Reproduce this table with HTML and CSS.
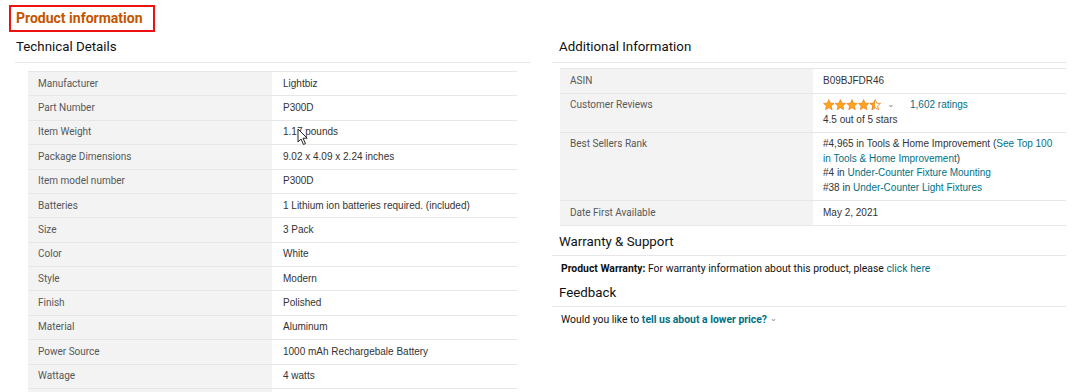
FILE: index.html
```html
<!DOCTYPE html>
<html lang="en">
<head>
  <meta charset="UTF-8" />
  <title>Product information</title>
  <link rel="stylesheet" href="styles.css">
</head>
<body>
  <div class="title-box"><h2>Product information</h2></div>

  <div class="columns">
    <!-- left: technical details -->
    <section class="col">
      <h3 class="section-head">Technical Details</h3>
      <table class="specs specs-tech">
        <tr><th>Manufacturer</th><td>Lightbiz</td></tr>
        <tr><th>Part Number</th><td>P300D</td></tr>
        <tr><th>Item Weight</th><td class="has-cursor">1.17 pounds
          <svg class="cursor" width="12" height="18" viewBox="0 0 12 18"><path d="M1 1 L1 14 L4 11 L6.5 16.5 L8.5 15.6 L6 10.2 L10.2 10.2 Z" fill="#fff" stroke="#222" stroke-width="1" stroke-linejoin="round"/></svg>
        </td></tr>
        <tr><th>Package Dimensions</th><td>9.02 x 4.09 x 2.24 inches</td></tr>
        <tr><th>Item model number</th><td>P300D</td></tr>
        <tr><th>Batteries</th><td>1 Lithium ion batteries required. (included)</td></tr>
        <tr><th>Size</th><td>3 Pack</td></tr>
        <tr><th>Color</th><td>White</td></tr>
        <tr><th>Style</th><td>Modern</td></tr>
        <tr><th>Finish</th><td>Polished</td></tr>
        <tr><th>Material</th><td>Aluminum</td></tr>
        <tr><th>Power Source</th><td>1000 mAh Rechargebale Battery</td></tr>
        <tr><th>Wattage</th><td>4 watts</td></tr>
        <tr class="spacer"><th></th><td></td></tr>
      </table>
    </section>

    <!-- right: additional info, warranty, feedback -->
    <section class="col col-right">
      <h3 class="section-head">Additional Information</h3>
      <table class="specs specs-extra">
        <tr><th>ASIN</th><td>B09BJFDR46</td></tr>
        <tr><th>Customer Reviews</th><td>
          <div class="rating-line">
            <svg class="stars" width="58" height="12" viewBox="0 0 58 12">
              <defs>
                <linearGradient id="half"><stop offset="50%" stop-color="#ffa41c"/><stop offset="50%" stop-color="#fff"/></linearGradient>
                <path id="st" d="M5.8 0.6 L7.3 4.1 L11.1 4.4 L8.2 6.9 L9.1 10.7 L5.8 8.7 L2.5 10.7 L3.4 6.9 L0.5 4.4 L4.3 4.1 Z"/>
              </defs>
              <use href="#st" x="0" fill="#ffa41c" stroke="#e47911" stroke-width="0.6"/>
              <use href="#st" x="11.6" fill="#ffa41c" stroke="#e47911" stroke-width="0.6"/>
              <use href="#st" x="23.2" fill="#ffa41c" stroke="#e47911" stroke-width="0.6"/>
              <use href="#st" x="34.8" fill="#ffa41c" stroke="#e47911" stroke-width="0.6"/>
              <use href="#st" x="46.4" fill="url(#half)" stroke="#e47911" stroke-width="0.8"/>
            </svg>
            <span class="chev">&#8964;</span>
            <a href="#">1,602 ratings</a>
          </div>
          <div>4.5 out of 5 stars</div>
        </td></tr>
        <tr><th>Best Sellers Rank</th><td>
          #4,965 in Tools &amp; Home Improvement (<a href="#">See Top 100 in Tools &amp; Home Improvement</a>)<br>
          #4 in <a href="#">Under-Counter Fixture Mounting</a><br>
          #38 in <a href="#">Under-Counter Light Fixtures</a>
        </td></tr>
        <tr><th>Date First Available</th><td>May 2, 2021</td></tr>
      </table>

      <h3 class="section-head sub">Warranty &amp; Support</h3>
      <p class="note"><b>Product Warranty:</b> For warranty information about this product, please <a href="#">click here</a></p>

      <h3 class="section-head sub">Feedback</h3>
      <p class="note">Would you like to <a class="strong" href="#">tell us about a lower price?</a> <span class="chev small">&#8964;</span></p>
    </section>
  </div>
</body>
</html>
```

FILE: styles.css
```css
* { box-sizing: border-box; margin: 0; padding: 0; }
body { font-family: Roboto, "Liberation Sans", sans-serif; background: #fff; color: #0f1111; overflow: hidden; height: 392px; }
a { color: #007185; text-decoration: none; }

/* red highlight box round the page title */
.title-box {
  display: inline-block;
  margin: 5px 0 0 9px;
  border: 2px solid #ee1111;
  padding: 4px 11px 4px 5px;
}
.title-box h2 { font-size: 14px; line-height: 15px; font-weight: 700; color: #c45500; }

/* two columns */
.columns { display: grid; grid-template-columns: 515px 514px; gap: 22px; padding: 0 14px 0 15px; }

.section-head {
  font-size: 13.3px; font-weight: 400; color: #0f1111;
  line-height: 20px;
  padding: 5px 0 5px 1px;
  border-bottom: 1px solid #e7e7e7;
}
.col-right .section-head { padding-left: 7px; }
.col-right .section-head.sub { padding-top: 6px; padding-bottom: 3px; }

/* spec tables */
.specs { border-collapse: collapse; table-layout: fixed; }
.specs th, .specs td {
  border-top: 1px solid #e7e7e7;
  padding: 4.7px 10px;
  line-height: 14px;
  font-size: 10px;
  text-align: left;
  vertical-align: top;
}
.specs th {
  background: #f3f3f3; color: #565959;
  font-weight: 400;
  font-family: Roboto, sans-serif;
}
.specs td { color: #333; font-family: "Liberation Sans", Arial, sans-serif; }

.specs-tech { margin: 8px 13px 0; width: 489px; }
.specs-tech th { width: 244px; }
.specs-tech td { padding-left: 11px; }
.specs-tech .spacer th, .specs-tech .spacer td { height: 4px; padding: 0; }

.specs-extra { margin: 5px 0 0 8px; width: 506px; }
.specs-extra th { width: 253px; }
.specs-extra th, .specs-extra td { line-height: 14.5px; padding-top: 4.6px; padding-bottom: 4.6px; }
.specs-extra tr:last-child th, .specs-extra tr:last-child td { border-bottom: 1px solid #e7e7e7; }

.has-cursor { position: relative; }
.cursor { position: absolute; left: 25px; top: 7px; }

.rating-line { display: flex; align-items: center; }
.stars { display: block; margin-top: -1px; }
.chev { color: #888; font-size: 9px; margin: 0 15px 0 6px; line-height: 10px; position: relative; top: -2px; }
.chev.small { margin: 0; font-size: 8px; }

.note {
  font-size: 10.4px; line-height: 14px; color: #0f1111;
  padding: 6px 0 1px 9px;
}
.note b { font-weight: 700; }
.note a.strong { font-weight: 700; }
```
